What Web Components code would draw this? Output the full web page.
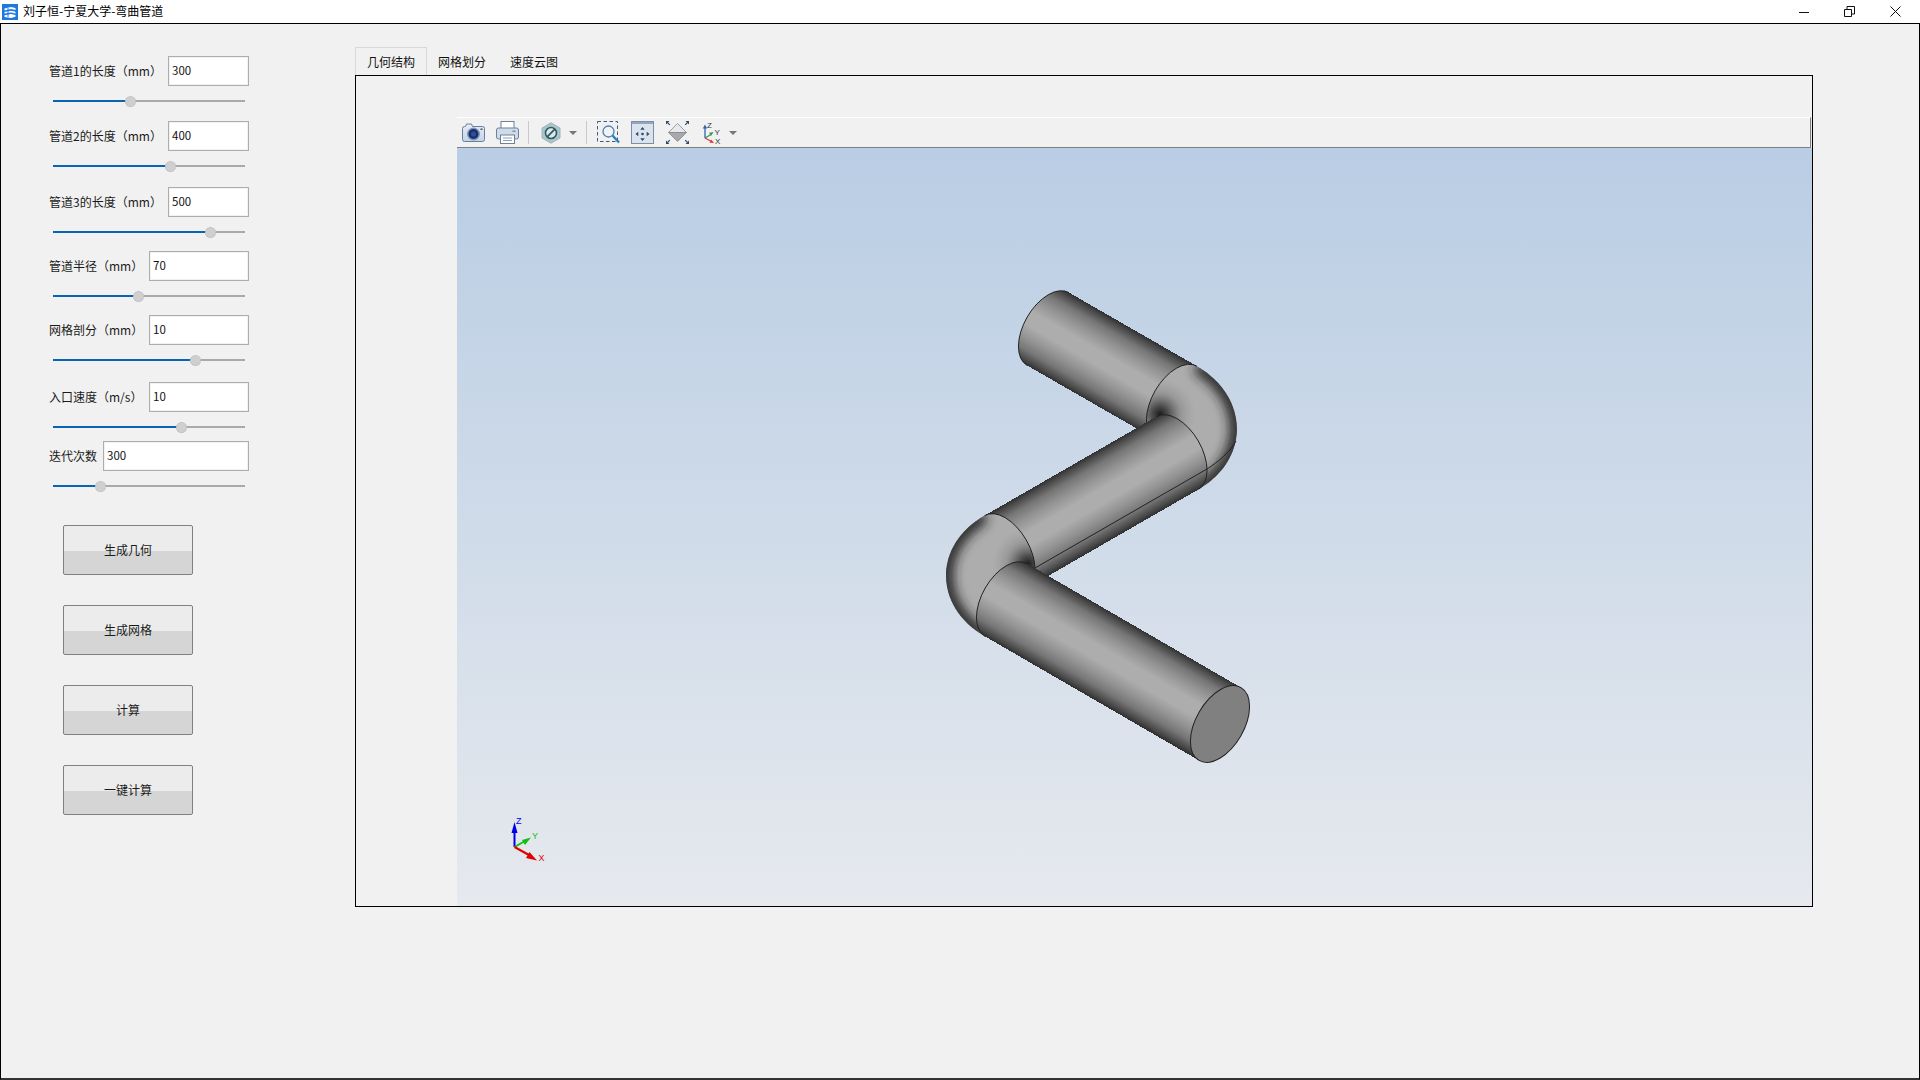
<!DOCTYPE html>
<html lang="zh-CN">
<head>
<meta charset="utf-8">
<title>刘子恒-宁夏大学-弯曲管道</title>
<style>
html,body{margin:0;padding:0;width:1920px;height:1080px;overflow:hidden;background:#f1f1f1}
body{font:12px "Noto Sans CJK SC","Liberation Sans",sans-serif;color:#1a1a1a}
</style>
</head>
<body>
<app-window>
  <title-bar slot="title">刘子恒-宁夏大学-弯曲管道</title-bar>
  <side-panel slot="side">
    <param-row label="管道1的长度（mm）" value="300" field="81" fill="77"></param-row>
    <param-row label="管道2的长度（mm）" value="400" field="81" fill="117" style="margin-top:14px"></param-row>
    <param-row label="管道3的长度（mm）" value="500" field="81" fill="157" style="margin-top:15px"></param-row>
    <param-row label="管道半径（mm）" value="70" field="100" fill="85" style="margin-top:13px"></param-row>
    <param-row label="网格剖分（mm）" value="10" field="100" fill="142" style="margin-top:13px"></param-row>
    <param-row label="入口速度（m/s）" value="10" field="100" fill="128" style="margin-top:16px"></param-row>
    <param-row label="迭代次数" value="300" field="146" fill="47" style="margin-top:8px"></param-row>
    <action-button style="margin-top:33px">生成几何</action-button>
    <action-button>生成网格</action-button>
    <action-button>计算</action-button>
    <action-button>一键计算</action-button>
  </side-panel>
  <tab-view slot="main">
    <tab-item slot="tabs" active>几何结构</tab-item>
    <tab-item slot="tabs" style="margin-left:-1px">网格划分</tab-item>
    <tab-item slot="tabs">速度云图</tab-item>
    <cad-viewer></cad-viewer>
  </tab-view>
</app-window>
<script>
class AppWindow extends HTMLElement{
  constructor(){super();this.attachShadow({mode:'open'}).innerHTML=`
  <style>
  :host{display:flex;flex-direction:column;width:1920px;height:1080px;box-sizing:border-box}
  .body{flex:1;display:flex;border:1px solid #000;border-bottom:2px solid #333;background:#f1f1f1;min-height:0}
  </style>
  <slot name="title"></slot>
  <div class="body"><slot name="side"></slot><slot name="main"></slot></div>`;}
}
class TitleBar extends HTMLElement{
  constructor(){super();this.attachShadow({mode:'open'}).innerHTML=`
  <style>
  :host{display:flex;align-items:center;height:23px;background:#fff;flex:none;color:#000}
  .logo{margin-left:2px;margin-right:5px;flex:none}
  .t{flex:1;font-size:12px;line-height:23px;white-space:nowrap;margin-top:-3px}
  .b{width:46px;height:23px;display:flex;align-items:center;justify-content:center;flex:none}
  .ctl{display:flex;margin-right:2px}
  .min{margin-right:-1px;margin-left:1px}
  svg{display:block}
  </style>
  <svg class="logo" width="16" height="16" viewBox="0 0 16 16">
    <rect width="16" height="16" fill="#1d78e0"/>
    <path d="M2.500 4.500 9 3l4.500 1v2L9 5 2.500 6.500zM2.500 8 9 6.800l4.500 1v1.600L9 8.400 2.500 9.600zM2.500 11.200 9 10l4.500 1v1.800L9 14l-6.500-1z" fill="#fff"/>
    <path d="M6 4v9" stroke="#1d78e0" stroke-width="1"/>
  </svg>
  <div class="t"><slot></slot></div>
  <div class="ctl">
    <div class="b min"><svg width="10" height="10" viewBox="0 0 10 10"><path d="M0 5.500H10" stroke="#111" stroke-width="1"/></svg></div>
    <div class="b"><svg width="11" height="11" viewBox="0 0 11 11" fill="none" stroke="#111"><path d="M.5 3.500h7v7h-7z"/><path d="M3 3V.5h7.500V8H8"/></svg></div>
    <div class="b"><svg width="11" height="11" viewBox="0 0 11 11" fill="none" stroke="#111" stroke-width="1"><path d="M.5.5l10 10M10.500.5l-10 10"/></svg></div>
  </div>`;}
}
class SidePanel extends HTMLElement{
  constructor(){super();this.attachShadow({mode:'open'}).innerHTML=`
  <style>
  :host{display:flex;flex-direction:column;width:354px;flex:none;box-sizing:border-box;padding:32px 0 0 48px}
  </style><slot></slot>`;}
}
class ParamRow extends HTMLElement{
  connectedCallback(){
    const field=this.getAttribute('field'),fill=this.getAttribute('fill');
    this.attachShadow({mode:'open'}).innerHTML=`
    <style>
    :host{display:block;width:200px;height:51px;flex:none}
    .top{display:flex;justify-content:space-between;align-items:center;height:30px}
    .label{white-space:nowrap;font-size:12px;margin-top:-1px}
    .field{box-sizing:border-box;height:30px;border:1px solid #adadad;box-shadow:inset 0 0 0 1px #f2f2f2;background:#fff;padding:0 0 0 3px;line-height:27px;font-size:11.5px;color:#111}
    .slider{display:flex;align-items:center;height:12px;margin:9px 0 0 4px;width:192px}
    .on{height:2px;background:#0a64b4;flex:none}
    .knob{width:9px;height:9px;border-radius:50%;background:#cfcfcf;border:1px dotted #b8b8b8;margin:0 -6px 0 -5px;flex:none;position:relative;z-index:1}
    .off{height:2px;background:#a9a9a9;flex:1}
    </style>
    <div class="top"><div class="label">${this.getAttribute('label')}</div><div class="field" style="width:${field}px">${this.getAttribute('value')}</div></div>
    <div class="slider"><div class="on" style="width:${fill}px"></div><div class="knob"></div><div class="off"></div></div>`;
  }
}
class ActionButton extends HTMLElement{
  constructor(){super();this.attachShadow({mode:'open'}).innerHTML=`
  <style>
  :host{display:flex;align-items:center;justify-content:center;box-sizing:border-box;width:130px;height:50px;margin:0 0 30px 14px;flex:none;border:1px solid #808080;border-radius:2px;padding-bottom:2px;
  background:linear-gradient(#ececec 0,#ececec 25px,#d5d5d5 25px,#d5d5d5 100%);font-size:12px;color:#1a1a1a}
  </style><slot></slot>`;}
}
class TabView extends HTMLElement{
  constructor(){super();this.attachShadow({mode:'open'}).innerHTML=`
  <style>
  :host{display:flex;flex-direction:column;flex:none;width:1458px;padding-top:23px}
  .tabs{display:flex;height:28px;flex:none}
  .pane{box-sizing:border-box;height:832px;border:1px solid #000;display:flex;flex-direction:column;padding:41px 0 0 101px;background:#f1f1f1}
  </style>
  <div class="tabs"><slot name="tabs"></slot></div>
  <div class="pane"><slot></slot></div>`;}
}
class TabItem extends HTMLElement{
  constructor(){super();this.attachShadow({mode:'open'}).innerHTML=`
  <style>
  :host{display:flex;align-items:center;justify-content:center;box-sizing:border-box;width:72px;height:28px;font-size:12px;color:#111;flex:none;border:1px solid transparent;border-bottom:0}
  :host([active]){border-color:#d9d9d9;background:#f1f1f1}
  </style><slot></slot>`;}
}
class ViewToolbar extends HTMLElement{
  constructor(){super();this.attachShadow({mode:'open'}).innerHTML=`
  <style>
  :host{display:flex;align-items:center;box-sizing:border-box;height:31px;flex:none;margin-right:1px;background:#f1f1f1;border-top:1px solid #fff;border-bottom:1px solid #808080;border-right:1px solid #808080;padding-left:5px}
  svg{display:block;flex:none}
  .sep{width:1px;height:23px;background:#c9c9c9;flex:none}
  text{font:8px "Liberation Sans",sans-serif;fill:#333}
  </style>
  <svg width="23" height="20" viewBox="0 0 23 20">
    <defs><linearGradient id="cb" x1="0" y1="0" x2="0" y2="1"><stop offset="0" stop-color="#e6edf5"/><stop offset="1" stop-color="#c4d3e5"/></linearGradient></defs>
    <path d="M.5 5.500a2 2 0 0 1 2-2h1l1-2.500h5l1 2.500h10a2 2 0 0 1 2 2v11a2 2 0 0 1-2 2h-18a2 2 0 0 1-2-2z" fill="url(#cb)" stroke="#64809f"/>
    <circle cx="11.500" cy="11" r="6.500" fill="#7c97b8"/><circle cx="11.500" cy="11" r="5" fill="#1c2f6b"/><circle cx="11.500" cy="11" r="2.500" fill="#2c4f9a"/>
    <rect x="18.500" y="5.500" width="2" height="1.500" fill="#456"/>
  </svg>
  <svg style="margin-left:11px" width="23" height="23" viewBox="0 0 23 23">
    <rect x="5" y=".5" width="13" height="7" fill="#fff" stroke="#6b819c"/>
    <path d="M2.500 7h18a2 2 0 0 1 2 2v7a2 2 0 0 1-2 2h-18a2 2 0 0 1-2-2V9a2 2 0 0 1 2-2z" fill="#cfdbe9" stroke="#6b819c"/>
    <rect x="4.500" y="14" width="14" height="8.500" fill="#fff" stroke="#6b819c"/>
    <path d="M7 17h9M7 19.500h9" stroke="#8ba0b8"/>
    <rect x="16.500" y="9.500" width="3" height="1.500" fill="#7d93ad"/>
  </svg>
  <div class="sep" style="margin-left:9px"></div>
  <svg style="margin-left:12px" width="20" height="22" viewBox="0 0 20 22">
    <path d="M10 .8 19 6v10l-9 5.200L1 16V6z" fill="#a9c5c6" stroke="#9fb2c4"/>
    <circle cx="10" cy="11" r="5.500" fill="#dfe9e9" stroke="#2e5a66" stroke-width="1.600"/>
    <path d="M6.200 14.800 13.800 7.200" stroke="#2e5a66" stroke-width="1.800"/>
  </svg>
  <svg style="margin-left:8px" width="8" height="4" viewBox="0 0 8 4"><path d="M0 0h8L4 4z" fill="#777"/></svg>
  <div class="sep" style="margin-left:9px"></div>
  <svg style="margin-left:10px" width="23" height="23" viewBox="0 0 23 23">
    <rect x=".5" y=".5" width="20" height="20" fill="none" stroke="#3f5c80" stroke-dasharray="3.500 2.500"/>
    <circle cx="11.500" cy="10.500" r="5.500" fill="#eef3f8" stroke="#4e7fae" stroke-width="1.300"/>
    <path d="M15.500 14.500 22 21.500" stroke="#2b7fc1" stroke-width="2.400"/>
  </svg>
  <svg style="margin-left:11px" width="23" height="23" viewBox="0 0 23 23">
    <rect x=".5" y=".5" width="22" height="22" fill="#dbe3ec" stroke="#7a8fab"/>
    <rect x="1" y="1" width="21" height="2" fill="#93a6bd"/>
    <circle cx="11.500" cy="13" r="1.300" fill="#2f4a6d"/>
    <path d="M11.500 6 9.300 8.800h4.400zM11.500 20l-2.200-2.800h4.400zM4.500 13l2.800-2.200v4.400zM18.500 13l-2.800-2.200v4.400z" fill="#2f4a6d"/>
  </svg>
  <svg style="margin-left:12px" width="23" height="23" viewBox="0 0 23 23">
    <path d="M11.500 2.500 20.500 11.500H2.500z" fill="#e9e9e9" stroke="#7d8a99" stroke-width=".8"/>
    <path d="M2.500 11.500h18L11.500 20.500z" fill="#a9a9a9" stroke="#7d8a99" stroke-width=".8"/>
    <path d="M.8.8l3 3M22.200.8l-3 3M.8 22.200l3-3M22.200 22.200l-3-3" stroke="#2f4a6d" stroke-width="1.200"/>
    <path d="M0 0h3.500L0 3.500zM23 0h-3.500L23 3.500zM0 23h3.500L0 19.500zM23 23h-3.500L23 19.500z" fill="#2f4a6d"/>
  </svg>
  <svg style="margin-left:13px" width="23" height="24" viewBox="0 0 23 24">
    <path d="M3 17V6" stroke="#2f62b0" stroke-width="1.300"/><path d="M3 3.500 .8 7.500h4.400z" fill="#2f62b0"/>
    <path d="M3 17l6-3.500" stroke="#2f9e4f" stroke-width="1.300"/><path d="M11.500 11 7 11.800 9 15z" fill="#2f9e4f"/>
    <path d="M3 17l6 3.200" stroke="#e03b3b" stroke-width="1.300"/><path d="M12 22 7.500 21.800 9.200 18.500z" fill="#e03b3b"/>
    <text x="5" y="7">Z</text><text x="12.500" y="14">Y</text><text x="13" y="23">X</text>
  </svg>
  <svg style="margin-left:4px" width="8" height="4" viewBox="0 0 8 4"><path d="M0 0h8L4 4z" fill="#777"/></svg>`;}
}
class PipeModel extends HTMLElement{
  constructor(){super();
  const stops=`<stop offset="0" stop-color="#303030"/><stop offset=".05" stop-color="#4a4a4a"/><stop offset=".15" stop-color="#767676"/><stop offset=".28" stop-color="#949494"/><stop offset=".42" stop-color="#adadad"/><stop offset=".58" stop-color="#adadad"/><stop offset=".72" stop-color="#949494"/><stop offset=".85" stop-color="#767676"/><stop offset=".95" stop-color="#4a4a4a"/><stop offset="1" stop-color="#303030"/>`;
  const outerR=`M1197 366.200C1249.300 396.400 1250.800 459.200 1198.500 489.400`;
  const elbowR=outerR+`L1155 439A42 24 -60 0 1 1197 366.200Z`;
  const outerL=`M984.500 515.600C932.800 545.400 933.300 606.600 985 636.400`;
  const elbowL=outerL+`L1026.500 588.400A42 24 60 0 0 984.500 515.600Z`;
  this.attachShadow({mode:'open'}).innerHTML=`
  <style>
  :host{display:block;flex:1;min-height:0;background:linear-gradient(#b9cde4,#e6e9ee)}
  svg{display:block;width:100%;height:100%}
  .f{shape-rendering:crispEdges}
  .l{fill:none;stroke:#222;stroke-width:1}
  text{font:9px "Liberation Sans",sans-serif}
  </style>
  <svg viewBox="457 148 1355 758" preserveAspectRatio="none">
    <defs>
      <linearGradient id="p1" gradientUnits="userSpaceOnUse" x1="1069" y1="292.600" x2="1027" y2="365.400">${stops}</linearGradient>
      <linearGradient id="p2" gradientUnits="userSpaceOnUse" x1="984.500" y1="515.600" x2="1026.500" y2="588.400">${stops}</linearGradient>
      <linearGradient id="p3" gradientUnits="userSpaceOnUse" x1="1027" y1="563.600" x2="985" y2="636.400">${stops}</linearGradient>
      <radialGradient id="pole"><stop offset="0" stop-color="#1c1c1c"/><stop offset=".22" stop-color="#3a3a3a" stop-opacity=".85"/><stop offset=".6" stop-color="#666" stop-opacity=".3"/><stop offset="1" stop-color="#888" stop-opacity="0"/></radialGradient>
      <filter id="bl" x="-50%" y="-50%" width="200%" height="200%"><feGaussianBlur stdDeviation="6"/></filter>
      <clipPath id="cr"><path d="${elbowR}"/></clipPath>
      <clipPath id="cl"><path d="${elbowL}"/></clipPath>
    </defs>
    <!-- pipe 1 -->
    <path class="f" d="M1027 365.400A42 24 -60 0 1 1069 292.600L1197 366.200L1155 439Z" fill="url(#p1)"/>
    <path class="l" d="M1027 365.400A42 24 -60 0 1 1069 292.600"/>
    <!-- right elbow -->
    <path class="f" d="${elbowR}" fill="#adadad"/>
    <g clip-path="url(#cr)">
      <path d="${outerR}" fill="none" stroke="#222" stroke-width="14" filter="url(#bl)"/>
      <circle cx="1160" cy="414" r="36" fill="url(#pole)"/>
    </g>
    <path class="l" d="M1155 439A42 24 -60 0 1 1197 366.200"/>
    <!-- pipe 2 -->
    <path class="f" d="M984.500 515.600L1156.500 416.600A42 24 60 0 1 1198.500 489.400L1026.500 588.400A42 24 60 0 0 984.500 515.600Z" fill="url(#p2)"/>
    <path class="l" d="M1156.500 416.600A42 24 60 0 1 1198.500 489.400"/>
    <!-- left elbow -->
    <path class="f" d="${elbowL}" fill="#adadad"/>
    <g clip-path="url(#cl)">
      <path d="${outerL}" fill="none" stroke="#222" stroke-width="14" filter="url(#bl)"/>
      <circle cx="1028" cy="564" r="36" fill="url(#pole)"/>
    </g>
    <path class="l" d="M1026.500 588.400A42 24 60 0 0 984.500 515.600"/>
    <!-- seam -->
    <path class="l" d="M1035 568L1207 469C1218 462 1230 452 1236 441"/>
    <!-- pipe 3 -->
    <path class="f" d="M985 636.400A42 24 -60 0 1 1027 563.600L1241 687.600A42 24 -60 0 1 1199 760.400Z" fill="url(#p3)"/>
    <path class="l" d="M985 636.400A42 24 -60 0 1 1027 563.600"/>
    <ellipse cx="1220" cy="724" rx="42" ry="24" transform="rotate(-60 1220 724)" fill="#808080" stroke="#222"/>
    <!-- triad -->
    <path d="M514.500 847V830" stroke="#0000e6" stroke-width="2"/><path d="M514.500 822 511.500 833h6z" fill="#0000e6"/>
    <path d="M514.500 847 525 841" stroke="#10c010" stroke-width="2"/><path d="M531 837.500 522 840 525 845z" fill="#10c010"/>
    <path d="M514.500 847 529 855" stroke="#e00000" stroke-width="2"/><path d="M537 860.500 526 858 529.500 852z" fill="#e00000"/>
    <text x="516" y="824" fill="#0000e6">Z</text>
    <text x="532" y="839" fill="#10c010">Y</text>
    <text x="538.500" y="861" fill="#e00000">X</text>
  </svg>`;}
}
class CadViewer extends HTMLElement{
  constructor(){super();this.attachShadow({mode:'open'}).innerHTML=`
  <style>:host{display:flex;flex-direction:column;flex:1;min-height:0;background:#e6e9ee}</style>
  <view-toolbar></view-toolbar><pipe-model></pipe-model>`;}
}
customElements.define('app-window',AppWindow);
customElements.define('title-bar',TitleBar);
customElements.define('side-panel',SidePanel);
customElements.define('param-row',ParamRow);
customElements.define('action-button',ActionButton);
customElements.define('tab-view',TabView);
customElements.define('tab-item',TabItem);
customElements.define('view-toolbar',ViewToolbar);
customElements.define('pipe-model',PipeModel);
customElements.define('cad-viewer',CadViewer);
</script>
</body>
</html>
